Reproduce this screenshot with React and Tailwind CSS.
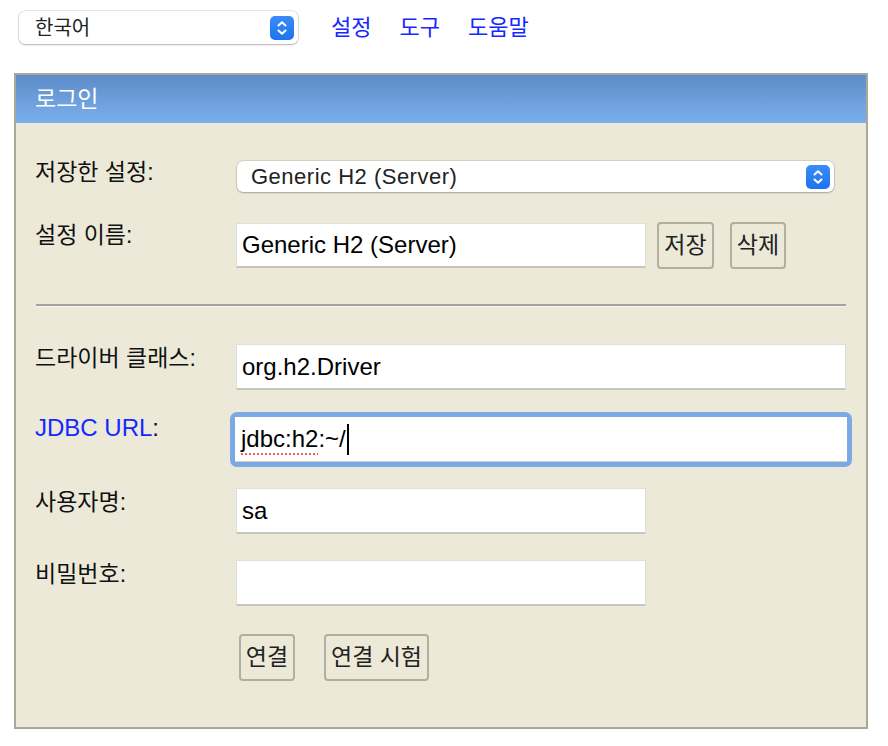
import React from 'react';

const font = { fontFamily: '"Liberation Sans", "Noto Sans CJK KR", Arial, sans-serif' };

function Stepper() {
  return (
    <span className="flex h-[24px] w-[24px] shrink-0 items-center justify-center rounded-[5px] bg-gradient-to-b from-[#3b8cf8] to-[#1c72f0]">
      <svg width="12" height="16" viewBox="0 0 12 16" fill="none" stroke="white" strokeWidth="2" strokeLinecap="round" strokeLinejoin="round">
        <path d="M2.5 5.5 6 2.2l3.5 3.3" />
        <path d="M2.5 10.5 6 13.8l3.5-3.3" />
      </svg>
    </span>
  );
}

function MacSelect({ value, className, textClass }) {
  return (
    <div
      className={`flex items-center justify-between rounded-[6px] bg-white pr-[4px] shadow-[0_0_0_0.5px_rgba(0,0,0,0.18),0_1px_2px_rgba(0,0,0,0.22)] ${className}`}
    >
      <span className={`text-[#222] ${textClass}`}>{value}</span>
      <Stepper />
    </div>
  );
}

function Field({ value, width }) {
  return (
    <input
      readOnly
      defaultValue={value}
      className={`h-[46px] border border-[#e2dfd4] border-b-2 border-b-[#c8c5bc] bg-white px-[5px] text-[24px] text-black outline-none ${width}`}
    />
  );
}

function Button({ children, width }) {
  return (
    <button className={`h-[47px] rounded-[4px] border-2 border-[#b3af9f] bg-[#ece9d8] text-[23px] text-[#222] ${width}`}>
      {children}
    </button>
  );
}

function Label({ children, className = '' }) {
  return <div className={`w-[201px] shrink-0 text-[23px] leading-[26px] text-[#111] ${className}`}>{children}</div>;
}

export default function App() {
  return (
    <div className="h-[746px] w-[888px] overflow-hidden bg-white" style={font}>
      <div className="flex items-center pl-[19px] pt-[11px]">
        <MacSelect value="한국어" className="h-[33px] w-[279px] pl-[16px]" textClass="text-[20px]" />
        <nav className="ml-[33px] flex gap-[28px] text-[22px] text-[#1428ff]">
          <a href="#">설정</a>
          <a href="#">도구</a>
          <a href="#">도움말</a>
        </nav>
      </div>

      <div className="ml-[14px] mt-[29px] w-[854px] border-2 border-[#aca899] bg-[#ece9d8]">
        <div className="flex h-[48px] items-center bg-gradient-to-b from-[#5d8cc8] to-[#7bb0ec] pl-[19px] text-[23px] text-white">
          로그인
        </div>

        <div className="pb-[46px] pl-[19px]">
          <div className="mt-[38px] flex items-start">
            <Label className="-mt-[2px]">저장한 설정:</Label>
            <MacSelect
              value="Generic H2 (Server)"
              className="ml-px h-[31px] w-[597px] pl-[14px]"
              textClass="text-[22px] tracking-[0.5px]"
            />
          </div>

          <div className="mt-[30px] flex items-start">
            <Label>설정 이름:</Label>
            <div className="flex items-center">
              <input
                readOnly
                defaultValue="Generic H2 (Server)"
                className="h-[45px] w-[410px] border border-[#e2dfd4] border-b-2 border-b-[#c8c5bc] bg-white px-[5px] text-[24px] text-black outline-none"
              />
              <div className="ml-[11px] flex gap-[16px]">
                <Button width="w-[57px]">저장</Button>
                <Button width="w-[56px]">삭제</Button>
              </div>
            </div>
          </div>

          <div className="ml-px mr-[20px] mt-[35px] h-[3px] border-t-2 border-b border-t-[#a2a2a2] border-b-[#f5f3ea]" />

          <div className="mt-[37px] flex items-start">
            <Label className="pt-px">드라이버 클래스:</Label>
            <Field value="org.h2.Driver" width="w-[610px]" />
          </div>

          <div className="mt-[22px] flex items-start">
            <Label className="pt-[3px] text-[#1428ff]">
              <span className="text-[24px]">JDBC URL</span>
              <span className="text-[24px] text-[#111]">:</span>
            </Label>
            <div className="-ml-[6px] rounded-[7px] border-[5px] border-[#7ca8e3]">
              <div className="flex h-[45px] w-[612px] items-center border-b border-b-[#d4d1c8] bg-white px-[6px] text-[24px] text-black">
                <span className="underline decoration-[#f06060] decoration-dotted decoration-2 underline-offset-[6px]">jdbc:h2</span>
                <span>:~/</span>
                <span className="ml-px h-[31px] w-[2px] bg-black" />
              </div>
            </div>
          </div>

          <div className="mt-[21px] flex items-start">
            <Label className="pt-px">사용자명:</Label>
            <Field value="sa" width="w-[410px]" />
          </div>

          <div className="mt-[26px] flex items-start">
            <Label className="pt-px">비밀번호:</Label>
            <Field value="" width="w-[410px]" />
          </div>

          <div className="mt-[28px] flex items-start">
            <div className="w-[201px] shrink-0" />
            <div className="ml-[3px] flex gap-[29px]">
              <Button width="w-[56px]">연결</Button>
              <Button width="w-[105px]">연결 시험</Button>
            </div>
          </div>
        </div>
      </div>
    </div>
  );
}
